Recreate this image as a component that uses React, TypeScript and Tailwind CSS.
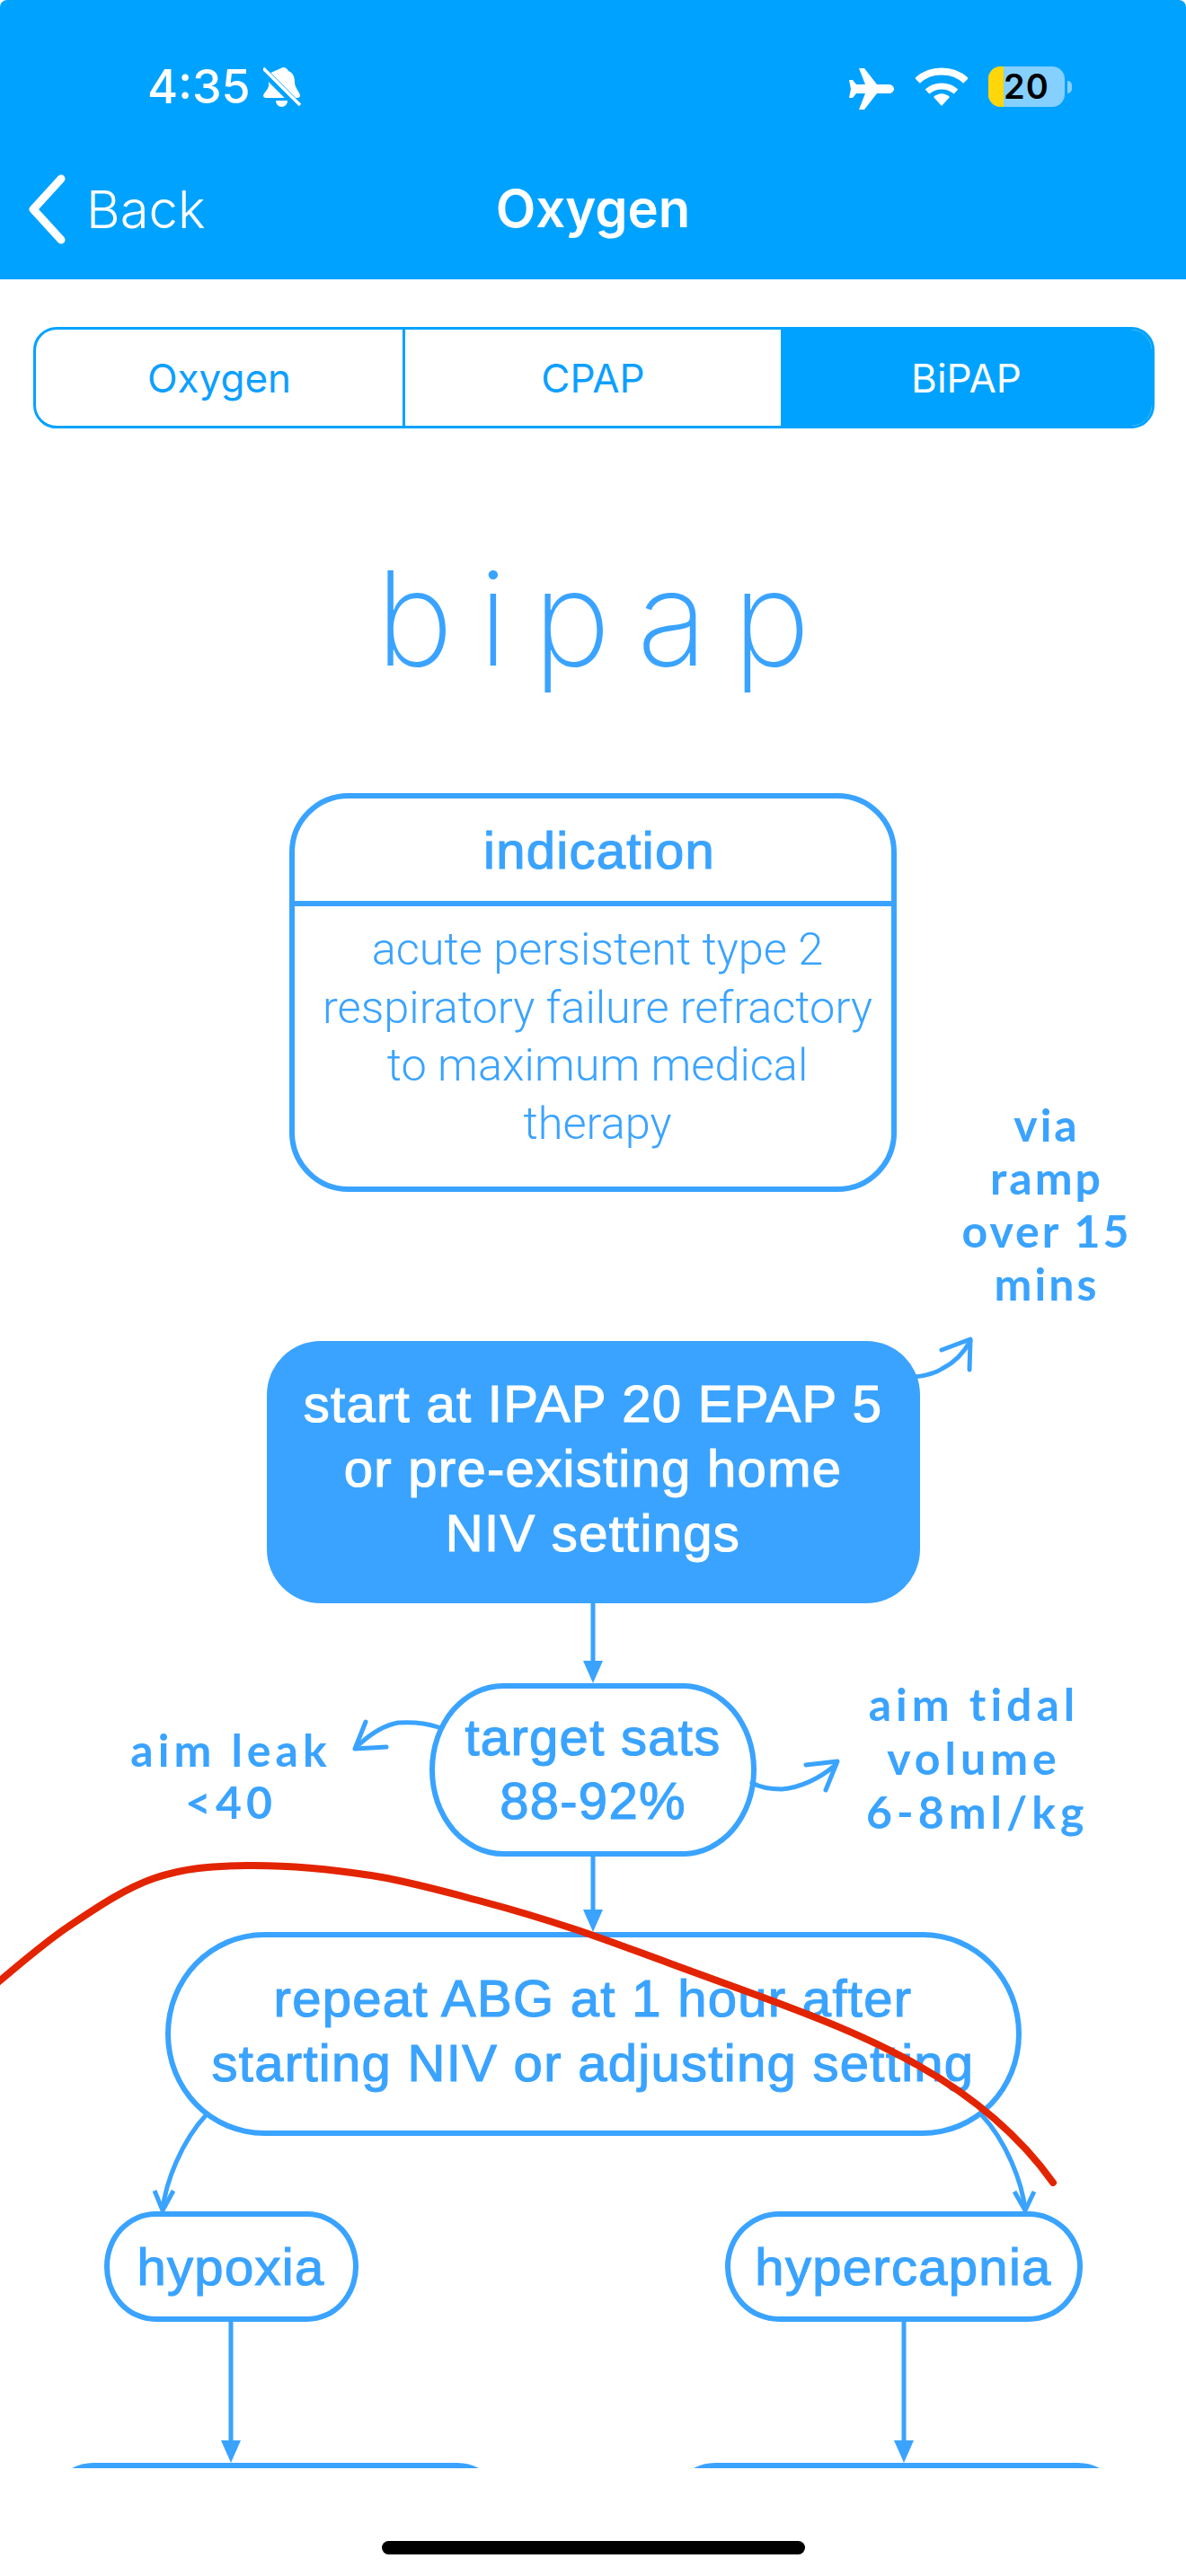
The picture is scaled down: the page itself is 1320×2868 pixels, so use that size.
const blue = '#3aa3ff'

function Arrow({ height }: { height: number }) {
  return (
    <svg width="24" height={height} viewBox={`0 0 24 ${height}`} className="block">
      <line x1="12" y1="0" x2="12" y2={height - 20} stroke={blue} strokeWidth="5" />
      <path d={`M1 ${height - 25} L23 ${height - 25} L12 ${height} Z`} fill={blue} />
    </svg>
  )
}

function StatusBar() {
  return (
    <div className="flex h-[168px] items-start justify-between pl-[164px] pr-[127px] pt-[74px] text-white">
      <div className="flex items-start gap-[14px]">
        <span className="font-['Inter',sans-serif] text-[52px] leading-[46px] font-medium">4:35</span>
        <svg width="42" height="46" viewBox="0 0 42 46">
          <path d="M22 1c3 0 5 2 6 4 6 2 7 8 7 13 0 5 5 10 6 14 0 2-1 3-3 3H3c-2 0-3-1-3-3 1-3 5-6 6-10V8L22 1z" fill="#fff" />
          <path d="M14 38h13c0 4-3 7-6.500 7S14 42 14 38z" fill="#fff" />
          <path d="M-2 3l42 42" stroke="#00a2ff" strokeWidth="9" />
          <path d="M0 2l41 41" stroke="#fff" strokeWidth="3.500" />
        </svg>
      </div>
      <div className="flex items-start">
        <svg width="50" height="46" viewBox="0 0 50 46" className="mt-[2px]">
          <path d="M11 0h6l14 18h13c3 0 6 2 6 5s-3 5-6 5H31L17 46h-6l7-18H8l-4 5H0l2-10-2-10h4l4 5h10L11 0z" fill="#fff" />
        </svg>
        <svg width="58" height="44" viewBox="0 0 58 44" className="ml-[24px] mt-[1px]">
          <path d="M2 15C16 1 42 1 56 15" stroke="#fff" strokeWidth="8" fill="none" />
          <path d="M13 27c9-8 23-8 32 0" stroke="#fff" strokeWidth="7" fill="none" />
          <path d="M20 33c6-5 12-5 18 0L29 43z" fill="#fff" />
        </svg>
        <div className="ml-[23px] flex items-center gap-[3px]">
          <div className="flex h-[45px] w-[85px] overflow-hidden rounded-[14px] bg-[#85d0ff]">
            <div className="h-full w-[17px] shrink-0 bg-[#ffd60a]" />
            <span className="font-['Inter',sans-serif] text-[38px] leading-[45px] font-semibold tracking-[1px] text-black">20</span>
          </div>
          <div className="h-[14px] w-[5px] rounded-r-full bg-[#85d0ff]" />
        </div>
      </div>
    </div>
  )
}

function NavBar() {
  return (
    <div className="relative flex h-[143px] items-start justify-center pt-[29px] text-white">
      <div className="absolute left-[30px] top-[26px] flex items-center gap-[22px]">
        <svg width="44" height="78" viewBox="0 0 44 78">
          <path d="M38 5L7 39l31 34" stroke="#fff" strokeWidth="9" strokeLinecap="round" strokeLinejoin="round" fill="none" />
        </svg>
        <span className="font-['Inter',sans-serif] text-[58px] leading-[70px] font-light">Back</span>
      </div>
      <span className="font-['Inter',sans-serif] text-[58px] leading-[70px] font-semibold">Oxygen</span>
    </div>
  )
}

function Segments() {
  return (
    <div className="ml-[37px] mr-[35px] mt-[53px] flex h-[113px] overflow-hidden rounded-[26px] border-[3px] border-[#00a2ff] font-['Inter',sans-serif] text-[44px] text-[#0d9fff]">
      <div className="flex w-[411px] items-center justify-center border-r-[3px] border-[#00a2ff]">Oxygen</div>
      <div className="flex w-[418px] items-center justify-center">CPAP</div>
      <div className="flex flex-1 items-center justify-center bg-[#00a2ff] text-white">BiPAP</div>
    </div>
  )
}

const medium = "font-['Liberation_Sans',sans-serif] text-[58px] tracking-[1.300px] [-webkit-text-stroke:1.200px_currentColor]"

function Pill({ className, children }: { className: string; children: React.ReactNode }) {
  return (
    <div className={`flex items-center justify-center border-[6px] border-[#3aa3ff] bg-white text-center text-[#3aa3ff] ${medium} ${className}`}>
      {children}
    </div>
  )
}

function Note({ className, children }: { className: string; children: React.ReactNode }) {
  return (
    <div className={`absolute whitespace-pre text-center font-['Lato',sans-serif] text-[50px] font-bold text-[#3aa3ff] ${className}`}>
      {children}
    </div>
  )
}

// smooth line through the traced points of the red pen stroke
function smooth(pts: number[][]) {
  let d = `M${pts[0][0]} ${pts[0][1]}`
  for (let i = 0; i < pts.length - 1; i++) {
    const p0 = pts[Math.max(i - 1, 0)]
    const p1 = pts[i]
    const p2 = pts[i + 1]
    const p3 = pts[Math.min(i + 2, pts.length - 1)]
    d += `C${p1[0] + (p2[0] - p0[0]) / 6} ${p1[1] + (p2[1] - p0[1]) / 6} ${p2[0] - (p3[0] - p1[0]) / 6} ${p2[1] - (p3[1] - p1[1]) / 6} ${p2[0]} ${p2[1]}`
  }
  return d
}

const redStroke = [
  [-6, 2210], [76, 2145], [172, 2091], [275, 2077], [413, 2088], [540, 2118], [640, 2148],
  [743, 2185], [847, 2223],
]

export default function App() {
  return (
    <div className="flex h-[2868px] w-[1320px] flex-col overflow-hidden bg-white">
      <header className="rounded-t-[8px] bg-[#00a2ff]">
        <StatusBar />
        <NavBar />
      </header>
      <main className="relative flex-1 overflow-hidden">
        <Segments />
        <h1 className="mt-[121px] pl-[28px] text-center font-['Inter',sans-serif] text-[146px] leading-[180px] font-[250] tracking-[28px] text-[#3aa3ff]">bipap</h1>
        <div className="mt-[105px] flex flex-col items-center">
          <div className="h-[444px] w-[676px] rounded-[66px] border-[6px] border-[#3aa3ff] text-center text-[#3aa3ff]">
            <div className={`flex h-[120px] items-center justify-center border-b-[6px] border-[#3aa3ff] pl-[14px] ${medium}`}>indication</div>
            <div className="pl-[10px] pt-[16px] font-['Roboto',sans-serif] text-[50.500px] leading-[64.500px] font-light">
              acute persistent type 2
              <br />
              respiratory failure refractory
              <br />
              to maximum medical
              <br />
              therapy
            </div>
          </div>
          <div className={`mt-[166px] flex h-[292px] w-[727px] items-center justify-center rounded-[60px] bg-[#3aa3ff] pb-[8px] text-center leading-[72px] text-white ${medium}`}>
            <span>
              start at IPAP 20 EPAP 5
              <br />
              or pre-existing home
              <br />
              NIV settings
            </span>
          </div>
          <Arrow height={89} />
          <Pill className="h-[193px] w-[364px] rounded-[82px/96px] pb-[4px] leading-[71px]">
            <span>
              target sats
              <br />
              88-92%
            </span>
          </Pill>
          <Arrow height={84} />
          <Pill className="h-[227px] w-[953px] rounded-[110px/113px] pb-[8px] leading-[72px]">
            <span>
              repeat ABG at 1 hour after
              <br />
              starting NIV or adjusting setting
            </span>
          </Pill>
          <div className="mt-[84px] flex w-[1089px] items-start justify-between">
            <div className="flex w-[283px] flex-col items-center">
              <Pill className="h-[123px] w-full rounded-[57px/61px]">hypoxia</Pill>
              <Arrow height={157} />
            </div>
            <div className="flex w-[398px] flex-col items-center">
              <Pill className="h-[123px] w-full rounded-[60px/61px]">hypercapnia</Pill>
              <Arrow height={157} />
            </div>
          </div>
          <div className="mr-[16px] flex w-[1196px] justify-between">
            <div className="h-[100px] w-[505px] rounded-[60px] border-[6px] border-[#3aa3ff]" />
            <div className="h-[100px] w-[504px] rounded-[60px] border-[6px] border-[#3aa3ff]" />
          </div>
        </div>

        <Note className="left-[1065px] top-[912px] w-[200px] leading-[59px] tracking-[3px]">{'via\nramp\nover 15\nmins'}</Note>
        <Note className="left-[137px] top-[1608px] w-[240px] leading-[58px] tracking-[5px]">{'aim leak\n<40'}</Note>
        <Note className="left-[964px] top-[1556px] w-[240px] leading-[60px] tracking-[5px]">{'aim tidal\nvolume\n6-8ml/kg'}</Note>

        {/* same coords as the full screenshot, so shifted up by the header */}
        <svg className="pointer-events-none absolute left-0 top-0" width="1320" height="2437" viewBox="0 311 1320 2437" fill="none">
          <g stroke={blue} strokeWidth="5" strokeLinecap="round" strokeLinejoin="round">
            <path d="M1017 1533c14-1 24-4 33-10 12-6 22-16 30-30" />
            <path d="M1048 1503l32-12-1 34" />
            <path d="M488 1923c-15-5-30-6-45-5-16 3-30 12-43 24" />
            <path d="M407 1917l-12 30 35-2" />
            <path d="M837 1985c11 6 22 7 33 7 22-2 42-12 60-27" />
            <path d="M897 1965l35-4-13 32" />
          </g>
          <g stroke={blue} strokeWidth="5" strokeLinejoin="round">
            <path d="M230 2354c-28 30-46 76-49 107" />
            <path d="M172 2439l9 22 12-22" />
            <path d="M1092 2354c28 30 46 76 49 107" />
            <path d="M1129 2440l12 21 10-21" />
          </g>
          <path d={`${smooth(redStroke)}C960 2265 1090 2315 1172 2430`} stroke="#e32400" strokeWidth="8" strokeLinecap="round" />
        </svg>
      </main>
      <footer className="flex h-[120px] shrink-0 justify-center bg-white pt-[81px]">
        <div className="h-[15px] w-[471px] rounded-full bg-black" />
      </footer>
    </div>
  )
}
